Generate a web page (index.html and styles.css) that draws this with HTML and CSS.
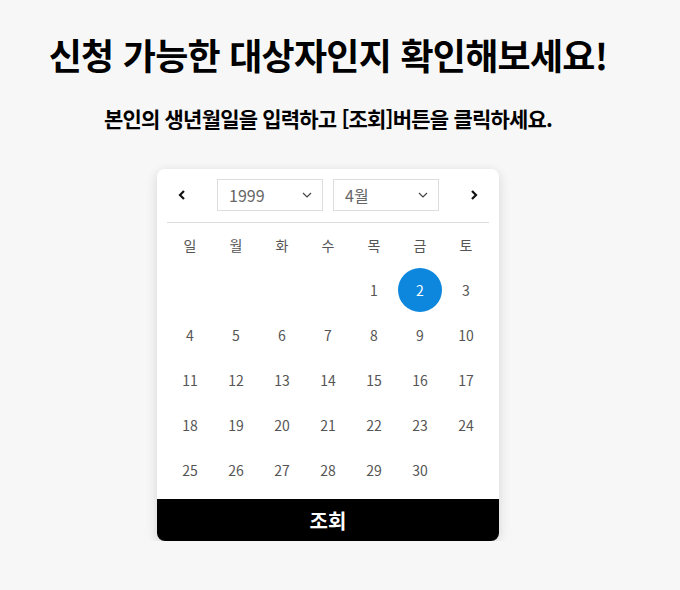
FILE: index.html
```html
<!DOCTYPE html>
<html lang="ko">
<head>
    <meta charset="UTF-8">
    <meta name="viewport" content="width=device-width, initial-scale=1.0">
    <title>대상자 조회</title>
    <link rel="stylesheet" href="styles.css">
</head>
<body>

    <div class="page">
        <h1>신청 가능한 대상자인지 확인해보세요!</h1>
        <p class="guide">본인의 생년월일을 입력하고 [조회]버튼을 클릭하세요.</p>

        <div class="calendar">
            <div class="cal-head">
                <button class="nav" id="prev" type="button">
                    <svg width="8" height="10" viewBox="0 0 8 10"><path d="M6 1 L2 5 L6 9" fill="none" stroke="#111" stroke-width="2.2"/></svg>
                </button>
                <div class="select">
                    <span>1999</span>
                    <svg width="10" height="6" viewBox="0 0 10 6"><path d="M1 1 L5 5 L9 1" fill="none" stroke="#444" stroke-width="1.2"/></svg>
                </div>
                <div class="select">
                    <span>4월</span>
                    <svg width="10" height="6" viewBox="0 0 10 6"><path d="M1 1 L5 5 L9 1" fill="none" stroke="#444" stroke-width="1.2"/></svg>
                </div>
                <button class="nav" id="next" type="button">
                    <svg width="8" height="10" viewBox="0 0 8 10"><path d="M2 1 L6 5 L2 9" fill="none" stroke="#111" stroke-width="2.2"/></svg>
                </button>
            </div>

            <div class="week">
                <span>일</span><span>월</span><span>화</span><span>수</span><span>목</span><span>금</span><span>토</span>
            </div>

            <div class="days">
                <span></span><span></span><span></span><span></span>
                <span>1</span><span><b class="picked">2</b></span><span>3</span>
                <span>4</span><span>5</span><span>6</span><span>7</span><span>8</span><span>9</span><span>10</span>
                <span>11</span><span>12</span><span>13</span><span>14</span><span>15</span><span>16</span><span>17</span>
                <span>18</span><span>19</span><span>20</span><span>21</span><span>22</span><span>23</span><span>24</span>
                <span>25</span><span>26</span><span>27</span><span>28</span><span>29</span><span>30</span><span></span>
            </div>

            <button class="search" type="button">조회</button>
        </div>
    </div>

</body>
</html>
```

FILE: styles.css
```css
body {
    margin: 0;
    background-color: #f7f7f7;
    font-family: "Noto Sans CJK KR", "Noto Sans", sans-serif;
    color: #000;
}
.page {
    width: 656px;
    text-align: center;
    padding-top: 28px;
}
h1 {
    margin: 0;
    font-size: 36px;
    font-weight: bold;
    letter-spacing: -0.75px;
    line-height: 52px;
}
.guide {
    margin: 22px 0 0;
    font-size: 21px;
    font-weight: bold;
    letter-spacing: -0.8px;
    line-height: 32px;
}
.calendar {
    width: 342px;
    margin: 35px auto 0;
    background-color: white;
    border-radius: 8px;
    box-shadow: 0 3px 12px rgba(0, 0, 0, 0.14);
    overflow: hidden;
}
.cal-head {
    display: flex;
    align-items: center;
    margin: 0 10px;
    padding: 10px 0 11px;
    border-bottom: 1px solid #ddd;
}
.nav {
    width: 30px;
    height: 31px;
    padding: 0;
    border: none;
    background: none;
    display: flex;
    align-items: center;
    justify-content: center;
    cursor: pointer;
}
#prev {
    margin-right: 20px;
}
#next {
    margin-left: auto;
}
.select {
    width: 106px;
    height: 32px;
    box-sizing: border-box;
    border: 1px solid #ddd;
    display: flex;
    align-items: center;
    justify-content: space-between;
    padding: 0 10px 0 11px;
    margin-right: 10px;
    font-size: 16px;
    color: #666;
}
.week, .days {
    display: grid;
    grid-template-columns: repeat(7, 46px);
    margin: 0 10px;
}
.week span {
    height: 44px;
    line-height: 44px;
    font-size: 14px;
    color: #555;
}
.days span {
    height: 45px;
    display: flex;
    align-items: center;
    justify-content: center;
    font-size: 14px;
    color: #555;
}
.days .picked {
    width: 44px;
    height: 44px;
    border-radius: 50%;
    background-color: #0d87de;
    color: white;
    font-weight: normal;
    display: flex;
    align-items: center;
    justify-content: center;
}
.search {
    display: block;
    width: 100%;
    height: 42px;
    margin-top: 7px;
    border: none;
    background-color: black;
    color: white;
    font-family: inherit;
    font-size: 20px;
    font-weight: bold;
    cursor: pointer;
}
```
